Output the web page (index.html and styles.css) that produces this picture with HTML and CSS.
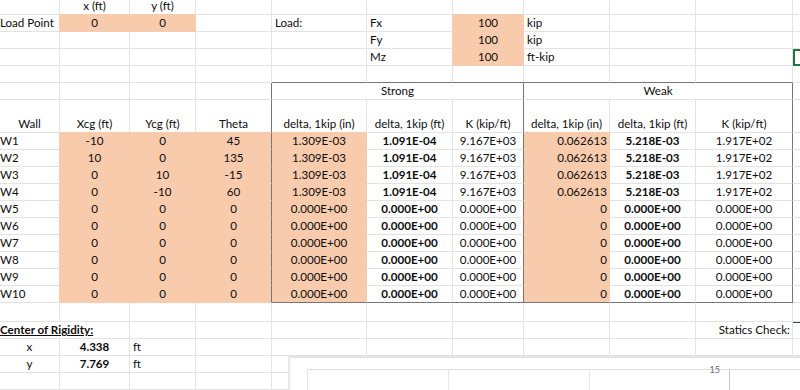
FILE: index.html
```html
<!DOCTYPE html>
<html>
<head>
<meta charset="utf-8">
<link rel="stylesheet" href="styles.css">
</head>
<body>
<div class="sheet">
  <!-- row 1 -->
  <div class="c"></div><div class="c ctr ob">x (ft)</div><div class="c ctr ob">y (ft)</div><div class="c"></div><div class="c"></div><div class="c"></div><div class="c ob"></div><div class="c"></div><div class="c"></div><div class="c"></div><div class="c"></div>
  <!-- row 2 -->
  <div class="c first or">Load Point</div><div class="c o ctr">0</div><div class="c o ctr">0</div><div class="c"></div><div class="c">Load:</div><div class="c or">Fx</div><div class="c o ctr">100</div><div class="c">kip</div><div class="c"></div><div class="c"></div><div class="c"></div>
  <!-- row 3 -->
  <div class="c"></div><div class="c"></div><div class="c"></div><div class="c"></div><div class="c"></div><div class="c or">Fy</div><div class="c o ctr">100</div><div class="c">kip</div><div class="c"></div><div class="c"></div><div class="c"></div>
  <!-- row 4 -->
  <div class="c"></div><div class="c"></div><div class="c"></div><div class="c"></div><div class="c"></div><div class="c or">Mz</div><div class="c o ctr">100</div><div class="c">ft-kip</div><div class="c"></div><div class="c"></div><div class="c sel"></div>
  <!-- row 5 -->
  <div class="c"></div><div class="c"></div><div class="c"></div><div class="c"></div><div class="c bb"></div><div class="c bb"></div><div class="c bb"></div><div class="c bb"></div><div class="c bb"></div><div class="c bb"></div><div class="c"></div>
  <!-- row 6 -->
  <div class="c"></div><div class="c"></div><div class="c"></div><div class="c br"></div><div class="c ctr span3 br">Strong</div><div class="c ctr span3 br">Weak</div><div class="c"></div>
  <!-- row 7 -->
  <div class="c ctr">Wall</div><div class="c ctr ob">Xcg (ft)</div><div class="c ctr ob">Ycg (ft)</div><div class="c ctr ob br">Theta</div><div class="c ctr ob">delta, 1kip (in)</div><div class="c ctr">delta, 1kip (ft)</div><div class="c ctr br">K (kip/ft)</div><div class="c ctr ob">delta, 1kip (in)</div><div class="c ctr">delta, 1kip (ft)</div><div class="c ctr br">K (kip/ft)</div><div class="c"></div>
  <!-- W1 -->
  <div class="c first or">W1</div><div class="c o ctr">-10</div><div class="c o ctr">0</div><div class="c o ctr br">45</div><div class="c o ctr">1.309E-03</div><div class="c b ctr">1.091E-04</div><div class="c ctr br">9.167E+03</div><div class="c o rt">0.062613</div><div class="c b ctr">5.218E-03</div><div class="c ctr br">1.917E+02</div><div class="c"></div>
  <!-- W2 -->
  <div class="c first or">W2</div><div class="c o ctr">10</div><div class="c o ctr">0</div><div class="c o ctr br">135</div><div class="c o ctr">1.309E-03</div><div class="c b ctr">1.091E-04</div><div class="c ctr br">9.167E+03</div><div class="c o rt">0.062613</div><div class="c b ctr">5.218E-03</div><div class="c ctr br">1.917E+02</div><div class="c"></div>
  <!-- W3 -->
  <div class="c first or">W3</div><div class="c o ctr">0</div><div class="c o ctr">10</div><div class="c o ctr br">-15</div><div class="c o ctr">1.309E-03</div><div class="c b ctr">1.091E-04</div><div class="c ctr br">9.167E+03</div><div class="c o rt">0.062613</div><div class="c b ctr">5.218E-03</div><div class="c ctr br">1.917E+02</div><div class="c"></div>
  <!-- W4 -->
  <div class="c first or">W4</div><div class="c o ctr">0</div><div class="c o ctr">-10</div><div class="c o ctr br">60</div><div class="c o ctr">1.309E-03</div><div class="c b ctr">1.091E-04</div><div class="c ctr br">9.167E+03</div><div class="c o rt">0.062613</div><div class="c b ctr">5.218E-03</div><div class="c ctr br">1.917E+02</div><div class="c"></div>
  <!-- W5 -->
  <div class="c first or">W5</div><div class="c o ctr">0</div><div class="c o ctr">0</div><div class="c o ctr br">0</div><div class="c o ctr">0.000E+00</div><div class="c b ctr">0.000E+00</div><div class="c ctr br">0.000E+00</div><div class="c o rt">0</div><div class="c b ctr">0.000E+00</div><div class="c ctr br">0.000E+00</div><div class="c"></div>
  <!-- W6 -->
  <div class="c first or">W6</div><div class="c o ctr">0</div><div class="c o ctr">0</div><div class="c o ctr br">0</div><div class="c o ctr">0.000E+00</div><div class="c b ctr">0.000E+00</div><div class="c ctr br">0.000E+00</div><div class="c o rt">0</div><div class="c b ctr">0.000E+00</div><div class="c ctr br">0.000E+00</div><div class="c"></div>
  <!-- W7 -->
  <div class="c first or">W7</div><div class="c o ctr">0</div><div class="c o ctr">0</div><div class="c o ctr br">0</div><div class="c o ctr">0.000E+00</div><div class="c b ctr">0.000E+00</div><div class="c ctr br">0.000E+00</div><div class="c o rt">0</div><div class="c b ctr">0.000E+00</div><div class="c ctr br">0.000E+00</div><div class="c"></div>
  <!-- W8 -->
  <div class="c first or">W8</div><div class="c o ctr">0</div><div class="c o ctr">0</div><div class="c o ctr br">0</div><div class="c o ctr">0.000E+00</div><div class="c b ctr">0.000E+00</div><div class="c ctr br">0.000E+00</div><div class="c o rt">0</div><div class="c b ctr">0.000E+00</div><div class="c ctr br">0.000E+00</div><div class="c"></div>
  <!-- W9 -->
  <div class="c first or">W9</div><div class="c o ctr">0</div><div class="c o ctr">0</div><div class="c o ctr br">0</div><div class="c o ctr">0.000E+00</div><div class="c b ctr">0.000E+00</div><div class="c ctr br">0.000E+00</div><div class="c o rt">0</div><div class="c b ctr">0.000E+00</div><div class="c ctr br">0.000E+00</div><div class="c"></div>
  <!-- W10 -->
  <div class="c first or">W10</div><div class="c o ctr">0</div><div class="c o ctr">0</div><div class="c o ctr br">0</div><div class="c o ctr bb">0.000E+00</div><div class="c b ctr bb">0.000E+00</div><div class="c ctr br bb">0.000E+00</div><div class="c o rt bb">0</div><div class="c b ctr bb">0.000E+00</div><div class="c ctr br bb">0.000E+00</div><div class="c"></div>
  <!-- row 18 -->
  <div class="c"></div><div class="c"></div><div class="c"></div><div class="c"></div><div class="c"></div><div class="c"></div><div class="c"></div><div class="c"></div><div class="c"></div><div class="c"></div><div class="c"></div>
  <!-- row 19 -->
  <div class="c first b u nr">Center of Rigidity:</div><div class="c"></div><div class="c"></div><div class="c"></div><div class="c"></div><div class="c"></div><div class="c"></div><div class="c"></div><div class="c"></div><div class="c rt">Statics Check:</div><div class="c kt"></div>
  <!-- row 20 -->
  <div class="c ctr">x</div><div class="c b ctr">4.338</div><div class="c">ft</div><div class="c"></div><div class="c"></div><div class="c"></div><div class="c"></div><div class="c"></div><div class="c"></div><div class="c"></div><div class="c"></div>
  <!-- row 21 -->
  <div class="c ctr">y</div><div class="c b ctr">7.769</div><div class="c">ft</div><div class="c"></div><div class="c"></div><div class="c"></div><div class="c"></div><div class="c"></div><div class="c"></div><div class="c"></div><div class="c"></div>
  <!-- row 22 -->
  <div class="c"></div><div class="c"></div><div class="c"></div><div class="c"></div><div class="c"></div><div class="c"></div><div class="c"></div><div class="c"></div><div class="c"></div><div class="c"></div><div class="c"></div>
</div>

<div class="pane">
  <div class="page">
    <div class="pcol"></div>
    <div class="pcol"></div>
    <div class="pcol dark"><span class="pnum">15</span></div>
    <div class="pcol last"></div>
  </div>
</div>
</body>
</html>
```

FILE: styles.css
```css
html, body {
  margin: 0;
  padding: 0;
}
body {
  width: 800px;
  height: 390px;
  overflow: hidden;
  background: #ffffff;
  font-family: Lato, "Open Sans", "DejaVu Sans", sans-serif;
  font-size: 11.6px;
  color: #0d0d0d;
  position: relative;
}
.sheet {
  display: grid;
  grid-template-columns: 60px 70px 66px 76px 95px 86px 71px 86px 86px 97px 40px;
  grid-template-rows: 15px repeat(5, 17px) 33px repeat(10, 17px) 19px 17px 17px 17px 17px;
}
.c {
  box-sizing: border-box;
  border-right: 1px solid #e3e3e3;
  border-bottom: 1px solid #e3e3e3;
  display: flex;
  align-items: flex-end;
  padding: 0 2px 2px 3px;
  white-space: nowrap;
  line-height: 13px;
  min-width: 0;
}
.first { padding-left: 0; }
.ctr { justify-content: center; padding-left: 0; padding-right: 0; }
.rt { justify-content: flex-end; padding-right: 2px; }
.b { font-weight: 700; }
.u { text-decoration: underline; }
.span3 { grid-column: span 3; }

.o {
  background: #f8cbad;
  border-color: #f8cbad;
}
.ob { border-bottom-color: #f8cbad; }
.or { border-right-color: #f8cbad; }
.nr { border-right-color: transparent; }

.br { border-right-color: #767676; }
.bb { border-bottom-color: #767676; }
.kt { border-top: 1px solid #444; }
.sel {
  border: 2px solid #217346;
  border-right: none;
}

.pane {
  position: absolute;
  left: 288px;
  top: 356px;
  right: 0;
  bottom: 0;
  background: #ffffff;
  border-top: 2px solid #e4e4e4;
  border-left: 2px solid #e8e8e8;
  box-sizing: border-box;
  padding: 11px 0 0 17px;
}
.page {
  display: flex;
  height: 100%;
  border-top: 1px solid #e0e0e0;
  border-left: 1px solid #e4e4e4;
  box-sizing: border-box;
}
.pcol {
  position: relative;
  width: 141px;
  flex: none;
  box-sizing: border-box;
  border-right: 1px solid #e6e6e6;
}
.pcol.dark {
  width: 140px;
  border-right-color: #c6c6c6;
}
.pcol.last {
  flex: 1;
  border-right: none;
}
.pnum {
  position: absolute;
  right: 9px;
  top: -5px;
  font-size: 9px;
  line-height: 10px;
  color: #6a6a6a;
  background: transparent;
}
```
